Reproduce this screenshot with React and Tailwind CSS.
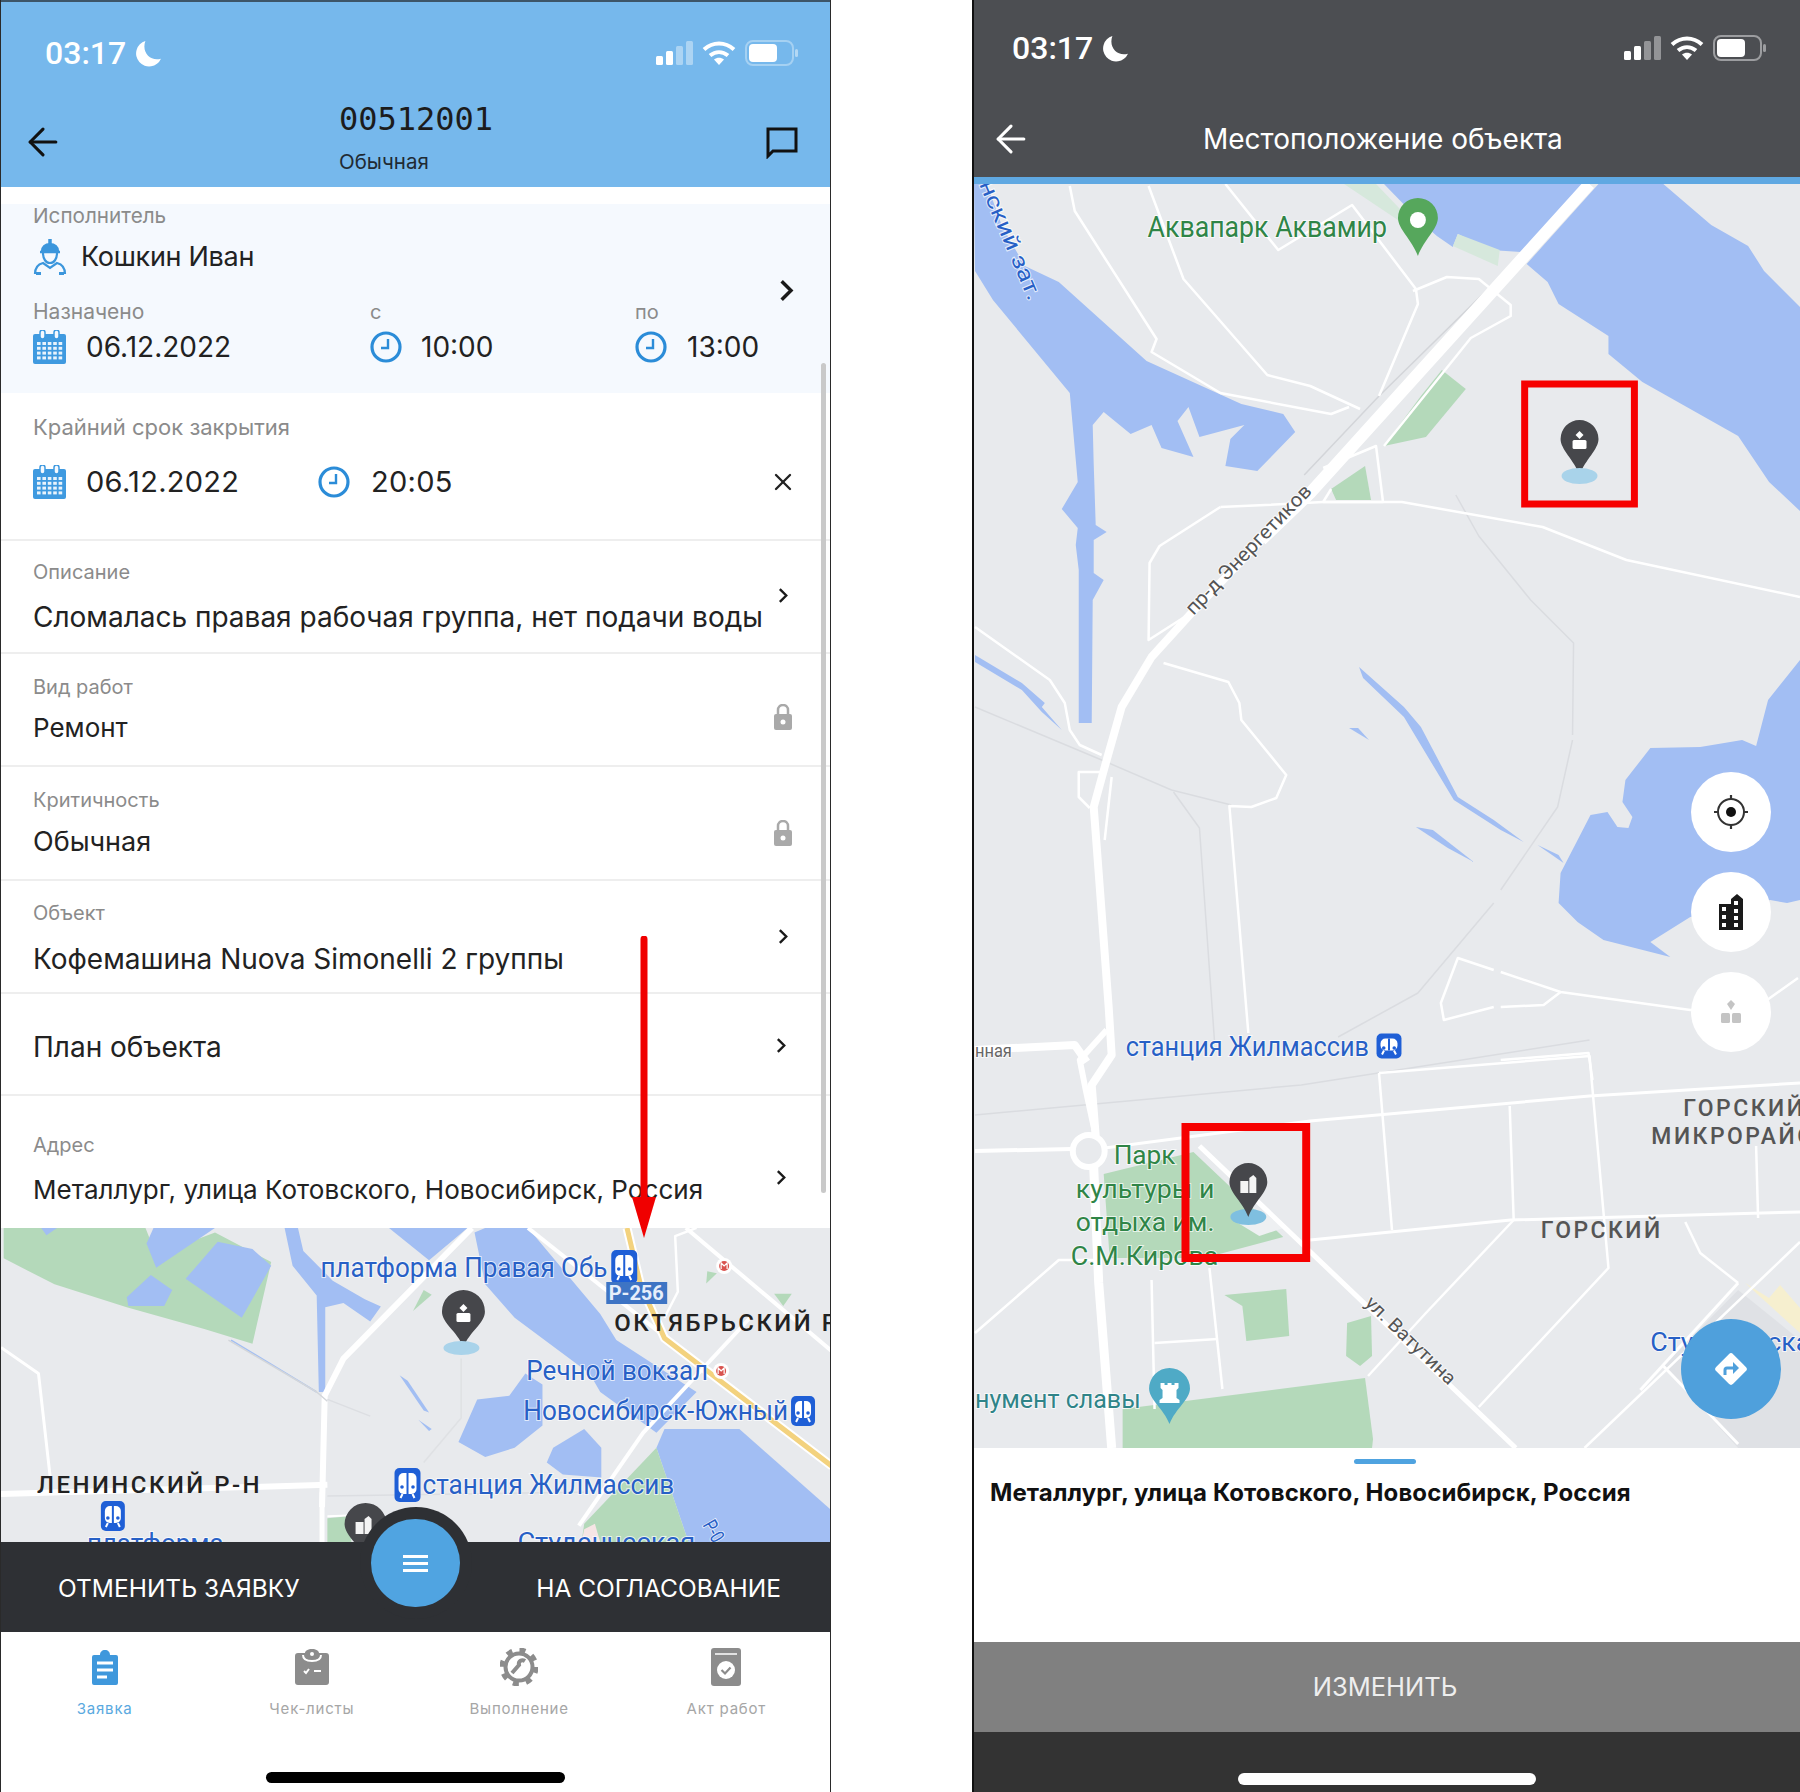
import { ArrowLeft, X } from "lucide-react";

const ROAD = "#ffffff";
const WATER = "#a2bef3";
const PARK = "#b4d9ba";
const LAND = "#e8eaed";
const MAP_BLUE = "#2760c6";
const MAP_GREEN = "#2f8547";

function Chevron({ className }) {
  return (
    <svg viewBox="0 0 12 18" className={className} fill="none" stroke="#1a1a1a" strokeWidth="2.6">
      <path d="M2 2l7 7-7 7" />
    </svg>
  );
}

function Padlock() {
  return (
    <svg viewBox="0 0 18 26" className="h-[26px] w-[18px]">
      <path d="M4 11V6a5 5 0 0 1 10 0v5" fill="none" stroke="#a9a9a9" strokeWidth="2.500" />
      <rect x="0" y="10" width="18" height="16" rx="2" fill="#a9a9a9" />
      <circle cx="9" cy="18" r="2.500" fill="#fff" />
    </svg>
  );
}

function Moon({ className }) {
  return (
    <svg viewBox="0 0 26 26" className={className} fill="#fff">
      <path d="M10 1a12.5 12.5 0 1 0 15 17C15 21 6 12 10 1z" />
    </svg>
  );
}

function StatusIcons({ className, dim }) {
  return (
    <div className={className}>
      <svg viewBox="0 0 37 24" className="h-[24px] w-[37px]">
        <rect x="0" y="15" width="7" height="9" rx="1.5" fill="#fff" />
        <rect x="10" y="10" width="7" height="14" rx="1.5" fill="#fff" />
        <rect x="20" y="5" width="7" height="19" rx="1.5" fill="#fff" fillOpacity=".4" />
        <rect x="30" y="0" width="7" height="24" rx="1.5" fill="#fff" fillOpacity=".4" />
      </svg>
      <svg viewBox="0 0 34 24" className="ml-[9px] h-[24px] w-[34px]" fill="none" stroke="#fff" strokeWidth="4">
        <path d="M2 8.5c9-8 21-8 30 0" />
        <path d="M8 14.5c5.500-4.500 12.500-4.500 18 0" />
        <path d="M17 24l-5-5.500c3-2.500 7-2.500 10 0z" fill="#fff" stroke="none" />
      </svg>
      <svg viewBox="0 0 54 26" className="ml-[9px] h-[26px] w-[54px]">
        <rect x="1" y="1" width="47" height="24" rx="7" fill="none" stroke="#fff" strokeOpacity={dim ? ".45" : ".35"} strokeWidth="2" />
        <rect x="4" y="4" width="28" height="18" rx="4" fill="#fff" />
        <rect x="50" y="9" width="3" height="8" rx="1.500" fill="#fff" fillOpacity=".45" />
      </svg>
    </div>
  );
}

function CalendarIcon() {
  const cells = [];
  for (let r = 0; r < 4; r++) {
    for (let c = 0; c < 5; c++) {
      cells.push(<rect key={`${r}-${c}`} x={4 + c * 5.4} y={12 + r * 4.8} width="3.6" height="3" fill="#e8f3fc" />);
    }
  }
  return (
    <svg viewBox="0 0 33 34" className="h-[34px] w-[33px] shrink-0">
      <rect x="0" y="4" width="33" height="30" rx="2" fill="#3f9ae0" />
      <rect x="7" y="0" width="5" height="9" rx="2.500" fill="#f5f9fe" stroke="#3f9ae0" strokeWidth="1.500" />
      <rect x="21" y="0" width="5" height="9" rx="2.500" fill="#f5f9fe" stroke="#3f9ae0" strokeWidth="1.500" />
      {cells}
    </svg>
  );
}

function ClockIcon() {
  return (
    <svg viewBox="0 0 32 32" className="h-[32px] w-[32px] shrink-0" fill="none" stroke="#2b8cd8">
      <circle cx="16" cy="16" r="14" strokeWidth="3.200" />
      <path d="M18 8v9h-7" strokeWidth="2.400" />
    </svg>
  );
}

function WorkerIcon() {
  return (
    <svg viewBox="0 0 34 36" className="h-[36px] w-[34px] shrink-0" fill="none" stroke="#3b96dc" strokeWidth="2.200">
      <path d="M9 12c0-4 3-7 8-7s8 3 8 7z" fill="#3b96dc" />
      <path d="M17 0v5" strokeWidth="3.500" />
      <path d="M7 13h20" strokeWidth="2.500" />
      <path d="M10 14c0 6 3 10 7 10s7-4 7-10" />
      <path d="M2 35c0-7 4-10 8-11l7 5 7-5c4 1 8 4 8 11" />
      <path d="M3 35h5M26 35h5" strokeWidth="4" />
    </svg>
  );
}

function ListRow({ className, label, value, valueClass, side, sideClass }) {
  return (
    <div className={`flex border-b-2 border-[#eeeeee] pl-[32px] ${className}`}>
      <div className="min-w-0 flex-1">
        {label ? <div className="text-[20px] leading-[24px] text-[#8b8b8b]">{label}</div> : null}
        <div className={`whitespace-nowrap leading-[34px] text-[#222222] ${valueClass}`}>{value}</div>
      </div>
      <div className={`mr-[27px] flex w-[40px] shrink-0 justify-center ${sideClass}`}>{side}</div>
    </div>
  );
}

function TabIcon({ kind }) {
  if (kind === "order") {
    return (
      <svg viewBox="0 0 26 36" className="h-[36px] w-[26px]">
        <path d="M2 6h6c0-3 2-5 5-5s5 2 5 5h6a2 2 0 0 1 2 2v26a2 2 0 0 1-2 2H2a2 2 0 0 1-2-2V8a2 2 0 0 1 2-2z" fill="#3f98dc" />
        <path d="M5 14h16M5 21h16M5 28h10" stroke="#fff" strokeWidth="3" />
      </svg>
    );
  }
  if (kind === "check") {
    return (
      <svg viewBox="0 0 34 36" className="h-[36px] w-[34px]" fill="#8c8c8c">
        <path d="M3 4h7c0-2 3-4 7-4s7 2 7 4h7a3 3 0 0 1 3 3v26a3 3 0 0 1-3 3H3a3 3 0 0 1-3-3V7a3 3 0 0 1 3-3z" />
        <path d="M8 6c0 4 3 6 9 6s9-2 9-6" fill="none" stroke="#fff" strokeWidth="2" />
        <circle cx="17" cy="5" r="2" fill="#fff" />
        <path d="M9 22l2 2 3-4M19 22h7" fill="none" stroke="#fff" strokeWidth="2" />
      </svg>
    );
  }
  if (kind === "gear") {
    return (
      <svg viewBox="0 0 38 38" className="h-[38px] w-[38px]" fill="none" stroke="#8c8c8c">
        <circle cx="19" cy="19" r="13.500" strokeWidth="4" />
        <circle cx="19" cy="19" r="17" strokeWidth="5" strokeDasharray="6 7.350" />
        <path d="M25 13c-3-2-7 0-6 4L12 25" strokeWidth="4" />
      </svg>
    );
  }
  return (
    <svg viewBox="0 0 30 38" className="h-[38px] w-[30px]">
      <path d="M3 0h24a3 3 0 0 1 3 3v32a3 3 0 0 1-3 3H3a3 3 0 0 1-3-3V3a3 3 0 0 1 3-3z" fill="#8c8c8c" />
      <path d="M4 6h22" stroke="#fff" strokeWidth="1.500" />
      <circle cx="15" cy="22" r="9" fill="#fff" />
      <path d="M10.500 22l3.500 3.500 5.500-6" fill="none" stroke="#8c8c8c" strokeWidth="2.200" />
    </svg>
  );
}

// map bits, all in screen px
function Poly({ points, fill = WATER }) {
  return <polygon points={points} fill={fill} />;
}

function Road({ d, w = 3, color = ROAD }) {
  return <polyline points={d} fill="none" stroke={color} strokeWidth={w} strokeLinejoin="round" vectorEffect="non-scaling-stroke" />;
}

function Label({ x, y, len, size = 26, fill = MAP_BLUE, weight = 400, rotate, children }) {
  return (
    <text
      x={x}
      y={y}
      fontSize={size}
      fontWeight={weight}
      fontFamily="Roboto, sans-serif"
      fill={fill}
      textLength={len}
      lengthAdjust="spacingAndGlyphs"
      transform={rotate ? `rotate(${rotate} ${x} ${y})` : undefined}
      stroke="#ffffff"
      strokeOpacity=".7"
      strokeWidth="2"
      paintOrder="stroke"
    >
      {children}
    </text>
  );
}

function Pin({ cx, top, tip, w, fill = "#46474b", inner }) {
  const r = w / 2;
  const h = tip - top;
  return (
    <g>
      <path
        d={`M${cx} ${tip}C${cx - r * 0.3} ${tip - h * 0.28} ${cx - r} ${top + r * 1.55} ${cx - r} ${top + r}A${r} ${r} 0 1 1 ${cx + r} ${top + r}C${cx + r} ${top + r * 1.55} ${cx + r * 0.3} ${tip - h * 0.28} ${cx} ${tip}Z`}
        fill={fill}
      />
      {inner}
    </g>
  );
}

function PersonGlyph({ cx, cy }) {
  return (
    <g fill="#fff">
      <path d={`M${cx} ${cy - 10}l4 4-4 4-4-4z`} />
      <rect x={cx - 7} y={cy - 1} width="14" height="9" rx="1.500" />
    </g>
  );
}

function BuildingGlyph({ cx, cy }) {
  return (
    <g fill="#f4f4f4">
      <rect x={cx - 8} y={cy - 3} width="8" height="12" />
      <path d={`M${cx + 1} ${cy + 9}v-15l4-3 3 3v15z`} />
    </g>
  );
}

function TrainBadge({ x, y, w = 26, h = 34 }) {
  return (
    <g>
      <rect x={x - w / 2} y={y - h / 2} width={w} height={h} rx="5" fill="#1f5fd6" />
      <rect x={x - w / 2 + 4} y={y - h / 2 + 5} width={w - 8} height={h - 13} rx="5" fill="#fff" />
      <rect x={x - 1} y={y - h / 2 + 5} width="2" height={h - 13} fill="#1f5fd6" />
      <circle cx={x - w / 4 + 1} cy={y + 2} r="1.800" fill="#1f5fd6" />
      <circle cx={x + w / 4 - 1} cy={y + 2} r="1.800" fill="#1f5fd6" />
      <path d={`M${x - 5} ${y + h / 2 - 8}l-2 4M${x + 5} ${y + h / 2 - 8}l2 4`} stroke="#fff" strokeWidth="2" />
    </g>
  );
}

function MetroDot({ x, y }) {
  return (
    <g>
      <circle cx={x} cy={y} r="8" fill="#fff" />
      <circle cx={x} cy={y} r="5" fill="#d9534f" />
      <path d={`M${x - 3} ${y + 3}v-6l3 3 3-3v6`} stroke="#fff" strokeWidth="1.200" fill="none" />
    </g>
  );
}

function LeftMap() {
  return (
    <svg viewBox="0 1228 830 314" className="block h-[314px] w-full" preserveAspectRatio="none">
      <rect x="0" y="1228" width="830" height="314" fill={LAND} />
      {/* shapes traced at the crop's scale */}
      <g transform="scale(0.5357 0.3712) translate(0 3260)">
        <Poly fill={PARK} points="5,48 270,48 290,120 400,60 505,140 470,360 380,320 235,262 100,200 5,130" />
        <Poly points="285,48 400,48 290,155 272,90" />
        <Poly points="280,175 320,215 305,258 238,258 235,235" />
        <Poly points="405,85 470,105 505,150 450,290 345,185" />
        <Poly points="75,48 105,48 85,68" />
        <Poly points="530,48 555,48 565,110 620,190 680,240 710,260 690,300 640,250 606,262 606,490 594,490 590,230 545,150" />
        <Poly points="725,48 872,48 800,135" />
        <Poly points="885,60 905,48 985,48 1120,280 1150,350 1300,490 1225,600 1120,490 1100,440 960,290 905,200" />
        <Poly points="980,440 1012,470 1012,580 960,640 905,665 855,625 890,510 950,500" />
        <Poly points="1090,590 1122,640 1122,720 1050,712 1020,680 1032,640" />
        <Poly points="1240,590 1380,590 1553,810 1553,895 1285,895 1225,640" />
        <Poly fill={PARK} points="1225,640 1285,895 1085,895 1090,845" />
        <Poly fill={PARK} points="790,215 805,228 770,272" />
        <Poly fill={PARK} points="1320,165 1338,170 1318,198" />
        <Poly fill={PARK} points="1445,225 1478,225 1462,258" />
        <Poly points="745,445 760,460 800,545 790,540" />
        <Poly points="780,565 805,590 800,595" />
        <Road d="430,350 590,490" w={1.500} color={WATER} />
        <Road d="0,370 70,440 92,720" w={3} />
        <Road d="0,765 610,740" w={6} />
        <Road d="880,48 640,400 605,500 600,800" w={6} />
        <Road d="600,760 600,895" w={5} />
        <Road d="985,48 1240,340" w={4} />
        <Road d="1170,48 1195,200 1240,345 1553,690" w={9} />
        <Road d="1170,48 1195,200 1240,345 1553,690" w={5} color="#f3d27e" />
        <Road d="1280,48 1553,380" w={4} />
        <Road d="1300,48 1260,70 1265,220 1240,290" w={2.500} />
        <Road d="1400,290 1200,600 1080,850" w={4} />
        <Road d="610,825 700,820" w={2} />
        <Road d="610,770 1090,760" w={1.500} color="#dcdee2" />
        <Road d="610,510 690,555" w={1.500} color="#dcdee2" />
        <Road d="860,400 860,560 790,680" w={1.500} color="#dfe1e4" />
        <Poly fill="#f6e5e5" points="1090,860 1110,845 1120,895 1085,895" />
        <Poly fill={PARK} points="610,830 650,825 655,895 610,895" />
        <Road d="425,350 590,490 610,515" w={1.500} color="#d3d6da" />
      </g>
      <Label x={320} y={1277} len={287} size={27}>платформа Правая Обь</Label>
      <TrainBadge x={624} y={1267} />
      <rect x="606" y="1282" width="61" height="22" fill="#3e74c4" />
      <text x="636" y="1300" textAnchor="middle" fontSize="20" fontWeight="700" fontFamily="Roboto, sans-serif" fill="#e6eefb">Р-256</text>
      <MetroDot x={724} y={1266} />
      <text x="614" y="1331" fontSize="24" fontWeight="500" fontFamily="Roboto, sans-serif" fill="#222" letterSpacing="2.500">ОКТЯБРЬСКИЙ Р</text>
      <Pin cx={463} top={1290} tip={1347} w={43} inner={<PersonGlyph cx={463} cy={1314} />} />
      <ellipse cx="461" cy="1348" rx="18" ry="7" fill="#a9d3ea" />
      <Label x={526} y={1380} len={182} size={27}>Речной вокзал</Label>
      <MetroDot x={721} y={1371} />
      <Label x={523} y={1420} len={265} size={27}>Новосибирск-Южный</Label>
      <TrainBadge x={803} y={1411} w={24} h={30} />
      <TrainBadge x={407} y={1485} />
      <Label x={422} y={1494} len={252} size={27}>станция Жилмассив</Label>
      <text x="36" y="1493" fontSize="24" fontWeight="500" fontFamily="Roboto, sans-serif" fill="#222" letterSpacing="2.500">ЛЕНИНСКИЙ Р-Н</text>
      <TrainBadge x={112} y={1516} w={24} h={30} />
      <Label x={86} y={1552} len={137} size={26}>платформа</Label>
      <Label x={517} y={1551} len={178} size={26}>Студенческая</Label>
      <Label x={702} y={1525} len={22} size={20} rotate={60}>Р-0</Label>
      <Pin cx={365} top={1503} tip={1560} w={42} inner={<BuildingGlyph cx={363} cy={1525} />} />
    </svg>
  );
}

function RightMap() {
  return (
    <svg viewBox="972 184 828 1264" className="block h-full w-full" preserveAspectRatio="none">
      <rect x="972" y="184" width="828" height="1264" fill={LAND} />
      <Poly points="1383,184 1588,184 1520,252 1490,250 1457,234 1452,247 1436,236 1420,222" />
      <Poly points="1598,184 1663,184 1711,225 1748,246 1764,271 1800,307 1800,511 1769,482 1738,436 1642,382 1608,354 1608,336 1558,304 1547,282 1526,264" />
      <Poly points="972,184 985,184 1000,226 1023,266 1057,282 1145,361 1240,404 1282,414 1294,432 1256,471 1224,466 1229,439 1243,425 1198,437 1187,407 1176,421 1192,457 1160,448 1150,425 1129,434 1102,412 1091,425 1092,464 1094,525 1105,532 1092,540 1092,573 1102,580 1091,600 1090,723 1077,723 1077,570 1074,545 1076,528 1060,509 1076,482 1068,393 991,300 973,271" />
      <Poly points="973,655 1020,683 1043,703 1040,707 1060,730 1040,712 1020,690 973,662" />
      <Poly points="1358,667 1403,707 1420,727 1457,797 1493,820 1523,842 1500,830 1453,800 1403,717 1362,678" />
      <Poly points="1348,728 1357,728 1368,740" />
      <Poly points="1415,827 1432,830 1473,862 1447,848" />
      <Poly points="1537,845 1558,855 1563,863" />
      <Poly points="1742,740 1700,747 1650,748 1625,780 1622,802 1632,817 1628,828 1617,827 1607,812 1590,815 1560,873 1558,903 1577,922 1603,940 1670,957 1650,942 1690,917 1770,900 1787,903 1800,900 1800,660 1768,700 1756,746" />
      <Poly fill={PARK} points="1441,370 1465,389 1425,437 1383,446 1420,396" />
      <Poly fill={PARK} points="1364,466 1370,500 1335,500 1330,489" />
      <Poly fill="#d6e8dc" points="1343,184 1375,184 1400,210 1400,222" />
      <Poly fill="#d6e8dc" points="1457,234 1499,250 1497,266 1452,246" />
      <Poly fill={PARK} points="1102,1174 1192,1152 1266,1222 1282,1237 1203,1258 1108,1258" />
      <Poly fill={PARK} points="1223,1295 1285,1289 1288,1336 1245,1341 1241,1306" />
      <Poly fill={PARK} points="1346,1323 1370,1316 1371,1356 1359,1366 1345,1356" />
      <Poly fill={PARK} points="1121,1409 1364,1378 1372,1439 1371,1448 1121,1448" />
      <Poly fill="#f6efcf" points="1745,1283 1769,1298 1780,1285 1800,1308 1800,1333" />
      <Poly fill="#dfe1e5" points="1663,1366 1738,1290 1800,1340 1800,1448 1738,1448" />
      <Poly fill="#eef0f2" points="1235,1222 1262,1212 1282,1228 1258,1236" />

      <Road d="1493,903 1417,993 1337,1037" w={1.500} color="#dadce0" />
      <Road d="1572,740 1557,807 1500,890" w={1.500} color="#dadce0" />
      <Road d="973,707 1100,760 1170,790 1230,805" w={1.500} color="#dadce0" />
      <Road d="1172,792 1198,828 1213,1040" w={1.500} color="#dadce0" />
      <Road d="1455,495 1478,536 1530,600 1573,643 1572,735" w={1.500} color="#dadce0" />
      <Road d="1520,257 1378,396 1303,475" w={1.500} color="#d3d5d9" />
      <Road d="973,1115 1300,1085 1589,1040" w={1.500} color="#dadce0" />

      <Road d="1068,186 1073,211 1155,339 1150,352 1219,393 1330,414 1348,407" w={2.500} />
      <Road d="1147,186 1182,279 1266,375 1309,386 1359,409" w={2.500} />
      <Road d="1224,184 1277,250 1351,205 1415,289 1417,304 1378,396" w={2.500} />
      <Road d="1412,291 1446,277 1478,279 1510,305 1510,316 1470,338 1383,446" w={2.500} />
      <Road d="1322,468 1375,446 1382,502 1322,502 1330,489" w={2.500} />
      <Road d="1219,507 1264,505 1322,502 1401,502 1542,527 1626,560 1800,597" w={2.500} />
      <Road d="1219,507 1158,546 1148,563 1147,640 1183,617" w={2.500} />
      <Road d="973,627 1048,680 1063,703 1068,730 1078,745 1100,755" w={2.500} />
      <Road d="1103,772 1077,772 1077,797 1088,808" w={2.500} />
      <Road d="1110,777 1103,840" w={2.500} />
      <Road d="1162,663 1227,682 1238,703 1240,720 1285,775 1275,798 1250,807 1228,806 1247,1033" w={2.500} />
      <Road d="1493,970 1457,958 1440,1003 1443,1020 1493,1007" w={2.500} />
      <Road d="1500,972 1560,992 1690,1010 1767,1000 1798,978" w={2.500} />
      <Road d="1560,992 1543,1005 1500,1007" w={2.500} />
      <Road d="1500,1060 1588,1053 1592,1080" w={2.500} />

      <Road d="1589,184 1309,493 1260,540" w={12} />
      <Road d="1260,540 1190,613 1150,657 1120,707 1103,767 1092,807 1097,873 1107,1007 1110,1055 1090,1085 1094,1136" w={8} />
      <Road d="1105,1030 1078,1060 1084,1090 1094,1136" w={6} />
      <Road d="973,1050 1073,1045 1085,1062" w={8} />
      <circle cx="1087" cy="1151" r="16" fill="none" stroke={ROAD} strokeWidth="6" />
      <Road d="973,1151 1070,1149" w={4} />
      <Road d="1092,1167 1097,1283 1110,1448" w={9} />
      <Road d="1198,1146 1515,1448" w={5} />
      <Road d="1103,1148 1309,1121 1589,1096 1800,1083" w={3} />
      <Road d="1309,1240 1510,1220 1800,1212" w={3} />
      <Road d="1378,1073 1589,1056 1608,1268 1478,1407" w={2.500} />
      <Road d="1378,1073 1391,1230" w={2.500} />
      <Road d="1509,1106 1513,1220 1425,1313 1367,1376" w={2.500} />
      <Road d="1685,1222 1700,1253 1738,1283" w={2.500} />
      <Road d="1800,1242 1584,1448" w={2.500} />
      <Road d="1756,1146 1758,1218" w={2.500} />
      <Road d="1150,1280 1153,1409" w={2.500} />
      <Road d="1208,1268 1221,1389" w={2.500} />
      <Road d="1153,1343 1216,1339" w={2.500} />
      <Road d="973,1333 1057,1260 1097,1260" w={2.500} />
      <Road d="1663,1366 1738,1444" w={3} />
      <Road d="1738,1283 1640,1390" w={3} />

      <Label x={1146} y={237} len={240} size={29} fill={MAP_GREEN}>Аквапарк Аквамир</Label>
      <Pin cx={1417} top={198} tip={256} w={40} fill="#56a75c" inner={<circle cx={1417} cy={220} r="8" fill="#fff" />} />
      <Label x={977} y={184} len={128} size={22} rotate={67}>нский зат.</Label>
      <Label x={1192} y={616} len={172} size={20} fill="#555" rotate={-46}>пр-д Энергетиков</Label>
      <Pin cx={1579} top={420} tip={475} w={38} inner={<PersonGlyph cx={1579} cy={441} />} />
      <ellipse cx="1579" cy="476" rx="18" ry="8" fill="#a9d3ea" />
      <rect x="1524" y="384" width="110" height="120" fill="none" stroke="#f60000" strokeWidth="7" />

      <Label x={973} y={1057} len={37} size={18} fill="#666">нная</Label>
      <Label x={1124} y={1056} len={244} size={27}>станция Жилмассив</Label>
      <TrainBadge x={1388} y={1046} w={25} h={25} />
      <text x="1683" y="1116" fontSize="23" fontWeight="500" fontFamily="Roboto, sans-serif" fill="#555" letterSpacing="2.500">ГОРСКИЙ</text>
      <text x="1651" y="1144" fontSize="23" fontWeight="500" fontFamily="Roboto, sans-serif" fill="#555" letterSpacing="2.500">МИКРОРАЙОН</text>
      <text x="1540" y="1238" fontSize="23" fontWeight="500" fontFamily="Roboto, sans-serif" fill="#555" letterSpacing="2.500">ГОРСКИЙ</text>

      <Label x={1112} y={1164} len={62} size={26} fill={MAP_GREEN}>Парк</Label>
      <Label x={1074} y={1198} len={139} size={26} fill={MAP_GREEN}>культуры и</Label>
      <Label x={1074} y={1231} len={139} size={26} fill={MAP_GREEN}>отдыха им.</Label>
      <Label x={1069} y={1265} len={148} size={26} fill={MAP_GREEN}>С.М.Кирова</Label>
      <ellipse cx="1247" cy="1217" rx="18" ry="8" fill="#7fbfe0" />
      <Pin cx={1247} top={1163} tip={1217} w={38} inner={<BuildingGlyph cx={1247} cy={1184} />} />
      <rect x="1184" y="1127" width="121" height="131" fill="none" stroke="#f60000" strokeWidth="8" />

      <Label x={1363} y={1304} len={118} size={19} fill="#555" rotate={44}>ул. Ватутина</Label>
      <Label x={1650} y={1351} len={175} size={26}>Студенческая</Label>
      <Label x={973} y={1408} len={166} size={26} fill="#2f8488">нумент славы</Label>
      <Pin
        cx={1168}
        top={1368}
        tip={1424}
        w={41}
        fill="#4faac6"
        inner={<path d="M1158 1403v-3l3-2v-8l-2-2v-5h4v2h3v-2h4v2h3v-2h4v5l-2 2v8l3 2v3z" fill="#fff" />}
      />
    </svg>
  );
}

export default function App() {
  return (
    <div className="flex h-[1792px] w-[1800px] items-start bg-white font-['Inter',sans-serif]">
      {/* left phone */}
      <div className="relative flex h-[1792px] w-[831px] shrink-0 flex-col border-x border-[#2a2a2a]">
        <header className="h-[187px] shrink-0 border-t-2 border-[#3d5568] bg-[#76b8ec]">
          <div className="mt-[34px] flex h-[34px] items-center pl-[44px]">
            <span className="font-['Roboto',sans-serif] text-[32px] font-medium leading-[34px] text-white">03:17</span>
            <Moon className="ml-[9px] h-[27px] w-[27px]" />
            <StatusIcons className="ml-auto mr-[31px] flex items-center" />
          </div>
          <div className="flex items-start">
            <ArrowLeft className="ml-[20px] mt-[50px] h-[44px] w-[44px] shrink-0 text-[#111]" strokeWidth={1.700} />
            <div className="ml-[274px] mt-[31px]">
              <div className="font-['DejaVu_Sans_Mono',monospace] text-[32px] leading-[36px] text-[#1c1c1c]">00512001</div>
              <div className="mt-[13px] text-[20.500px] leading-[24px] text-[#1f2a33]">Обычная</div>
            </div>
            <svg viewBox="0 0 32 32" className="ml-auto mr-[32px] mt-[57px] h-[32px] w-[32px]" fill="none" stroke="#111" strokeWidth="3">
              <path d="M2 2h28v22H7l-5 5z" />
            </svg>
          </div>
        </header>

        <div className="mt-[17px] flex h-[189px] shrink-0 bg-[#f5f9fe] pl-[32px]">
          <div className="flex-1">
            <div className="text-[20.700px] leading-[24px] text-[#8b8b8b]">Исполнитель</div>
            <div className="mt-[12px] flex h-[34px] items-center gap-[14px] text-[27px] tracking-[-0.3px] text-[#222222]">
              <WorkerIcon />
              <span>Кошкин Иван</span>
            </div>
            <div className="mt-[26px] grid grid-cols-[337px_265px_1fr]">
              <div>
                <div className="text-[21px] leading-[24px] text-[#8b8b8b]">Назначено</div>
                <div className="mt-[6px] flex h-[34px] items-center gap-[20px] text-[28px] text-[#222222]">
                  <CalendarIcon />
                  <span>06.12.2022</span>
                </div>
              </div>
              <div>
                <div className="text-[20px] leading-[24px] text-[#8b8b8b]">с</div>
                <div className="mt-[6px] flex h-[34px] items-center gap-[19px] text-[28px] text-[#222222]">
                  <ClockIcon />
                  <span>10:00</span>
                </div>
              </div>
              <div>
                <div className="text-[20px] leading-[24px] text-[#8b8b8b]">по</div>
                <div className="mt-[6px] flex h-[34px] items-center gap-[20px] text-[28px] text-[#222222]">
                  <ClockIcon />
                  <span>13:00</span>
                </div>
              </div>
            </div>
          </div>
          <Chevron className="mr-[35px] mt-[74px] h-[25px] w-[16px] shrink-0" />
        </div>

        <div className="flex h-[148px] shrink-0 border-b-2 border-[#eeeeee] pl-[32px] pt-[22px]">
          <div className="flex-1">
            <div className="text-[22px] leading-[24px] text-[#8b8b8b]">Крайний срок закрытия</div>
            <div className="mt-[26px] flex h-[34px] items-center text-[29px] tracking-[0.3px] text-[#222222]">
              <CalendarIcon />
              <span className="ml-[20px] w-[232px]">06.12.2022</span>
              <ClockIcon />
              <span className="ml-[21px]">20:05</span>
            </div>
          </div>
          <X className="mr-[33px] mt-[53px] h-[28px] w-[28px] text-[#222]" strokeWidth={2} />
        </div>

        <ListRow
          className="h-[113px] shrink-0 pt-[19px]"
          label="Описание"
          value="Сломалась правая рабочая группа, нет подачи воды"
          valueClass="mt-[16px] text-[28px]"
          sideClass="pt-[27px]"
          side={<Chevron className="h-[17px] w-[11px]" />}
        />
        <ListRow
          className="h-[113px] shrink-0 pt-[21px]"
          label="Вид работ"
          value="Ремонт"
          valueClass="mt-[12px] text-[26px]"
          sideClass="pt-[29px]"
          side={<Padlock />}
        />
        <ListRow
          className="h-[114px] shrink-0 pt-[21px]"
          label="Критичность"
          value="Обычная"
          valueClass="mt-[13px] text-[27px]"
          sideClass="pt-[32px]"
          side={<Padlock />}
        />
        <ListRow
          className="h-[113px] shrink-0 pt-[20px]"
          label="Объект"
          value="Кофемашина Nuova Simonelli 2 группы"
          valueClass="mt-[17px] text-[28px]"
          sideClass="pt-[27px]"
          side={<Chevron className="h-[17px] w-[11px]" />}
        />
        <ListRow
          className="h-[102px] shrink-0 pt-[36px]"
          value="План объекта"
          valueClass="text-[28px]"
          sideClass="pt-[7px] pr-[3px]"
          side={<Chevron className="h-[17px] w-[11px]" />}
        />
        <div className="flex h-[132px] shrink-0 pl-[32px] pt-[37px]">
          <div className="min-w-0 flex-1">
            <div className="text-[20px] leading-[24px] text-[#8b8b8b]">Адрес</div>
            <div className="mt-[16px] whitespace-nowrap text-[26px] leading-[34px] tracking-[0.05px] text-[#222222]">
              Металлург, улица Котовского, Новосибирск, Россия
            </div>
          </div>
          <div className="mr-[27px] flex w-[40px] shrink-0 justify-center pr-[3px] pt-[36px]">
            <Chevron className="h-[17px] w-[11px]" />
          </div>
        </div>

        <div className="h-[314px] shrink-0 overflow-hidden">
          <LeftMap />
        </div>

        <div className="relative flex h-[90px] shrink-0 items-center justify-between bg-[#2e3034] pl-[57px] pr-[49px] pt-[3px] text-[24.500px] text-white">
          <div className="absolute left-[359px] top-[-35px] h-[112px] w-[112px] rounded-full bg-[#2e3034]" />
          <div className="absolute left-[370px] top-[-23px] flex h-[88px] w-[89px] flex-col items-center justify-center gap-[4px] rounded-full bg-[#50a4e1]">
            <div className="h-[3px] w-[25px] bg-white" />
            <div className="h-[3px] w-[25px] bg-white" />
            <div className="h-[3px] w-[25px] bg-white" />
          </div>
          <span>ОТМЕНИТЬ ЗАЯВКУ</span>
          <span>НА СОГЛАСОВАНИЕ</span>
        </div>

        <div className="flex-1">
          <div className="grid grid-cols-4 pt-[16px]">
            {[
              ["order", "Заявка", "text-[#5aa9e0]"],
              ["check", "Чек-листы", "text-[#a6a6a6]"],
              ["gear", "Выполнение", "text-[#a6a6a6]"],
              ["act", "Акт работ", "text-[#a6a6a6]"],
            ].map(([kind, title, color]) => (
              <div key={kind} className="flex flex-col items-center">
                <div className="flex h-[38px] items-center">
                  <TabIcon kind={kind} />
                </div>
                <div className={`mt-[13px] text-[15px] leading-[20px] tracking-[0.8px] ${color}`}>{title}</div>
              </div>
            ))}
          </div>
          <div className="mx-auto mt-[53px] h-[11px] w-[299px] rounded-full bg-black" />
        </div>

        <div className="absolute left-[820px] top-[363px] h-[830px] w-[5px] rounded-full bg-[#c9c9c9]" />
        <svg viewBox="0 0 26 304" className="absolute left-[630px] top-[936px] h-[304px] w-[26px]">
          <path d="M13 3v262" stroke="#f00000" strokeWidth="7" strokeLinecap="round" />
          <path d="M1 261h24l-12 41z" fill="#f00000" />
        </svg>
      </div>

      {/* right phone */}
      <div className="ml-[141px] flex h-[1792px] w-[828px] shrink-0 flex-col border-l-2 border-[#111]">
        <header className="h-[177px] shrink-0 bg-[#4c4e52]">
          <div className="mt-[31px] flex h-[34px] items-center pl-[38px]">
            <span className="font-['Roboto',sans-serif] text-[32px] font-medium leading-[34px] text-white">03:17</span>
            <Moon className="ml-[9px] h-[27px] w-[27px]" />
            <StatusIcons dim className="ml-auto mr-[33px] flex items-center" />
          </div>
          <div className="flex items-center pt-[52px]">
            <ArrowLeft className="ml-[15px] h-[44px] w-[44px] shrink-0 text-white" strokeWidth={1.700} />
            <div className="ml-[170px] text-[28px] leading-[40px] text-white">Местоположение объекта</div>
          </div>
        </header>
        <div className="h-[7px] shrink-0 bg-[#5fa8e2]" />
        <div className="relative h-[1264px] shrink-0 overflow-hidden">
          <RightMap />
          <div className="absolute right-[29px] top-[588px] flex flex-col gap-[20px]">
            <div className="flex h-[80px] w-[80px] items-center justify-center rounded-full bg-white">
              <svg viewBox="0 0 36 36" className="h-[36px] w-[36px]" fill="none" stroke="#333">
                <circle cx="18" cy="18" r="13" strokeWidth="2" />
                <circle cx="18" cy="18" r="5" fill="#111" stroke="none" />
                <path d="M18 1v5M18 30v5M1 18h5M30 18h5" strokeWidth="2.200" />
              </svg>
            </div>
            <div className="flex h-[80px] w-[80px] items-center justify-center rounded-full bg-white">
              <svg viewBox="0 0 24 36" className="h-[36px] w-[24px]">
                <path d="M0 36V10h12V5l6-5 6 5v31z" fill="#1a1a1a" />
                <g fill="#fff">
                  <rect x="3" y="13" width="4" height="4" /><rect x="15" y="7" width="4" height="4" />
                  <rect x="3" y="21" width="4" height="4" /><rect x="15" y="15" width="4" height="4" />
                  <rect x="3" y="29" width="4" height="4" /><rect x="15" y="22" width="4" height="4" />
                  <rect x="15" y="29" width="4" height="4" />
                </g>
              </svg>
            </div>
            <div className="flex h-[80px] w-[80px] items-center justify-center rounded-full bg-white">
              <svg viewBox="0 0 20 24" className="h-[24px] w-[20px]" fill="#c4c4c4">
                <path d="M10 0l4 4-4 6-4-6z" />
                <rect x="0" y="13" width="9" height="10" rx="1.500" />
                <rect x="11" y="13" width="9" height="10" rx="1.500" />
              </svg>
            </div>
          </div>
          <div className="absolute right-[19px] top-[1135px] flex h-[100px] w-[100px] items-center justify-center rounded-full bg-[#4fa0dc]">
            <svg viewBox="0 0 38 38" className="h-[38px] w-[38px]">
              <rect x="7" y="7" width="24" height="24" rx="3" transform="rotate(45 19 19)" fill="#fff" />
              <path d="M13 25v-5a2 2 0 0 1 2-2h9" fill="none" stroke="#4fa0dc" strokeWidth="3" />
              <path d="M21 12l6 6-6 6z" fill="#4fa0dc" />
            </svg>
          </div>
        </div>
        <div className="h-[194px] shrink-0 bg-white pt-[11px]">
          <div className="ml-[380px] h-[5px] w-[62px] rounded-full bg-[#4fa3e0]" />
          <div className="ml-[16px] mt-[14px] whitespace-nowrap text-[24px] font-bold leading-[30px] tracking-[0.1px] text-[#111]">
            Металлург, улица Котовского, Новосибирск, Россия
          </div>
        </div>
        <div className="flex h-[90px] shrink-0 items-center justify-center pr-[4px] bg-[#808080] text-[25.500px] text-[#eeeeee]">ИЗМЕНИТЬ</div>
        <div className="flex-1 bg-[#333333] pt-[41px]">
          <div className="mx-auto h-[12px] w-[298px] rounded-full bg-white" />
        </div>
      </div>
    </div>
  );
}
